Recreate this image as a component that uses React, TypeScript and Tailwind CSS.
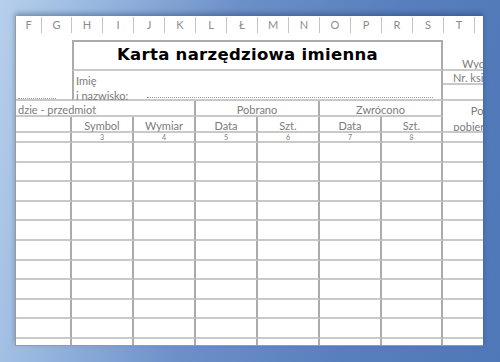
import React from 'react';

const letters = ['H', 'I', 'J', 'K', 'L', 'Ł', 'M', 'N', 'O', 'P', 'R', 'S', 'T'];
const subHeads = ['Symbol', 'Wymiar', 'Data', 'Szt.', 'Data', 'Szt.'];
const numbers = ['3', '4', '5', '6', '7', '8'];
const rows = Array.from({ length: 10 }, (_, i) => i);

// shared cell borders: vertical lines darker, horizontal lines lighter
const vr = 'border-r-2 border-r-[#ababab]';
const hb = 'border-b-2 border-b-[#c9c9c9]';

export default function App() {
    return (
        <div
            className="w-[500px] h-[362px] overflow-hidden pt-[16px] pl-[15px] bg-[linear-gradient(100deg,#b6cfeb_0%,#9ab9e1_16%,#6c90c8_42%,#587fbd_72%,#4f78b8_100%)]"
            style={{ fontFamily: 'Lato, "Noto Sans", sans-serif' }}
        >
            <div className="w-[468px] h-[330px] bg-white border-l border-b border-[#9a9a9a] shadow-[0_-3px_5px_rgba(20,40,80,0.35)] flex flex-col">
                {/* Column letters */}
                <div className="flex h-[18px] text-[11px] text-[#8c8c8c]">
                    <div className="w-[26px] text-center border-r border-[#c4c4c4] my-[1px] leading-[16px]">F</div>
                    <div className="w-[30px] text-center border-r border-[#c4c4c4] my-[1px] leading-[16px]">G</div>
                    {letters.map((l) => (
                        <div key={l} className="w-[31px] text-center border-r border-[#c4c4c4] my-[1px] leading-[16px]">
                            {l}
                        </div>
                    ))}
                    <div className="w-[8px]" />
                </div>
                <div className="h-[6px]" />

                <div className="flex-1 grid grid-cols-[56px_62px_62px_62px_62px_62px_61px_40px] grid-rows-[31px_30px_16px_16px_10px_repeat(10,19.6px)_1fr] text-[11px] text-[#7b7b7b]">
                    {/* Row: title */}
                    <div className={`row-span-2 flex items-end ${hb}`}>
                        <div className="ml-[2px] w-[38px] border-b border-dotted border-[#9a9a9a]" />
                    </div>
                    <div className="col-span-6 border-2 border-[#ababab] border-b-[#c9c9c9] flex items-center pl-[43px]">
                        <span
                            className="text-[16.5px] font-bold text-black tracking-[0.3px] whitespace-nowrap"
                            style={{ fontFamily: '"DejaVu Sans", Verdana, sans-serif' }}
                        >
                            Karta narzędziowa imienna
                        </span>
                    </div>
                    <div className={`overflow-hidden flex items-end whitespace-nowrap pl-[19px] ${hb}`}>
                        <span className="leading-[11px]">Wydział</span>
                    </div>

                    {/* Row: name */}
                    <div className={`col-span-6 flex border-l-2 border-l-[#ababab] ${vr} ${hb}`}>
                        <div className="pl-[2px] pt-[2px] leading-[15px] whitespace-nowrap">
                            <div>Imię</div>
                            <div>i nazwisko:</div>
                        </div>
                        <div className="flex-1 ml-[19px] mr-[8px] mb-[1px] self-end border-b border-dotted border-[#9a9a9a]" />
                    </div>
                    <div className={`overflow-hidden ${hb}`}>
                        <div className="h-[14px] border-b-2 border-b-[#c9c9c9] whitespace-nowrap pl-[10px] pt-[1px] leading-[12px]">
                            Nr. książki
                        </div>
                    </div>

                    {/* Row: group headers */}
                    <div className={`col-span-3 pl-[2px] pt-[1px] leading-[15px] whitespace-nowrap ${vr} ${hb}`}>dzie - przedmiot</div>
                    <div className={`col-span-2 text-center pt-[1px] leading-[15px] ${vr} ${hb}`}>Pobrano</div>
                    <div className={`col-span-2 text-center pt-[1px] leading-[15px] ${vr} ${hb}`}>Zwrócono</div>
                    <div className={`row-span-2 overflow-hidden ${hb}`}>
                        <div className="w-[88px] text-center leading-[16px] pt-[2px]">
                            <div>Podpis</div>
                            <div>pobierającego</div>
                        </div>
                    </div>

                    {/* Row: sub headers */}
                    <div className={`${vr} ${hb}`} />
                    {subHeads.map((s, i) => (
                        <div key={i} className={`text-center pt-[1px] leading-[15px] ${vr} ${hb}`}>
                            {s}
                        </div>
                    ))}

                    {/* Row: column numbers */}
                    <div className={`${vr} ${hb}`} />
                    {numbers.map((n) => (
                        <div key={n} className={`text-center text-[7px] leading-[9px] ${vr} ${hb}`}>
                            {n}
                        </div>
                    ))}
                    <div className={hb} />

                    {/* Data rows */}
                    {rows.map((r) => (
                        <React.Fragment key={r}>
                            {[0, 1, 2, 3, 4, 5, 6].map((c) => (
                                <div key={c} className={`${vr} ${hb}`} />
                            ))}
                            <div className={hb} />
                        </React.Fragment>
                    ))}

                    {/* Bottom filler */}
                    {[0, 1, 2, 3, 4, 5, 6].map((c) => (
                        <div key={c} className={vr} />
                    ))}
                    <div />
                </div>
            </div>
        </div>
    );
}
